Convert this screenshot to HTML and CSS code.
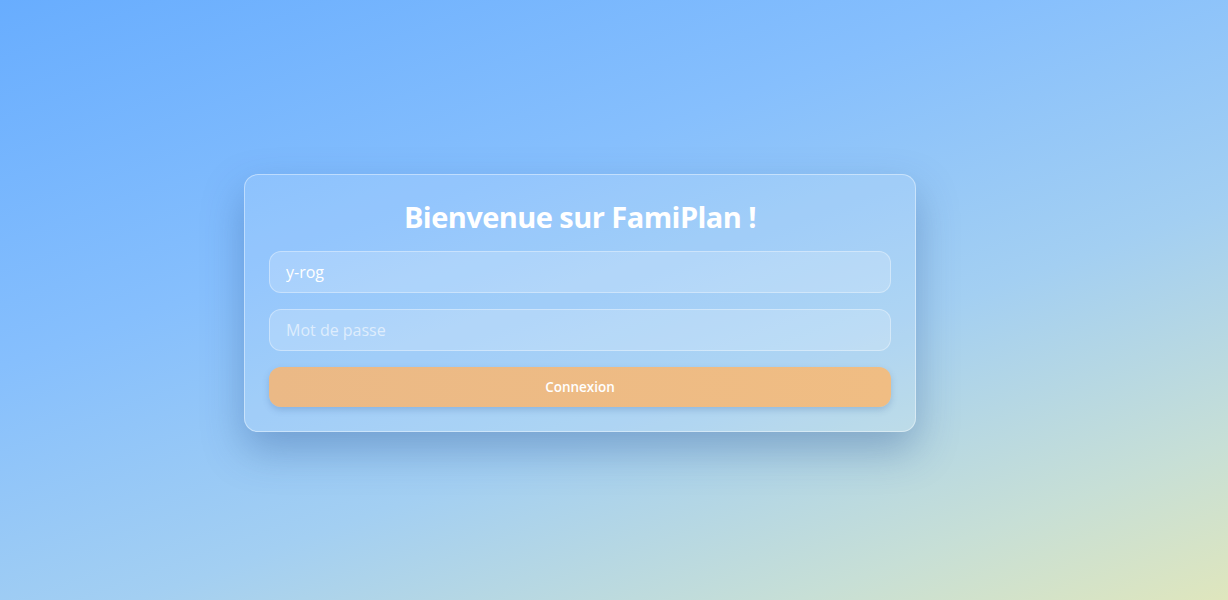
FILE: index.html
```html
<!DOCTYPE html>
<html lang="fr">
<head>
<meta charset="utf-8">
<title>FamiPlan</title>
<link rel="stylesheet" href="styles.css">
</head>
<body>
<main class="page">
  <form class="card">
    <h1 class="title">Bienvenue sur FamiPlan !</h1>
    <input class="field" type="text" value="y-rog">
    <input class="field" type="password" placeholder="Mot de passe">
    <button class="btn" type="button">Connexion</button>
  </form>
</main>
</body>
</html>
```
FILE: styles.css
```css
* { box-sizing: border-box; }
html, body { margin: 0; height: 100%; }
body {
  font-family: "Open Sans", "Noto Sans", sans-serif;
  background: linear-gradient(160deg, #68adfe 0%, #86bffd 35%, #a3cff2 62%, #c7dfd6 85%, #dfe6bd 100%);
  background-attachment: fixed;
  color: #fff;
}
.page {
  height: 100%;
  display: flex;
  align-items: center;
  justify-content: center;
  padding-top: 6px;
  padding-right: 68px;
}
.card {
  width: 672px;
  padding: 24px;
  border: 1px solid rgba(255,255,255,0.42);
  border-radius: 14px;
  background: rgba(255,255,255,0.12);
  box-shadow: 0 18px 40px rgba(40,80,140,0.35);
  display: flex;
  flex-direction: column;
  gap: 16px;
}
.title {
  margin: 0;
  font-size: 29px;
  font-weight: 700;
  text-align: center;
  line-height: 36px;
  letter-spacing: -0.55px;
}
.field {
  height: 42px;
  width: 100%;
  padding: 0 16px;
  border: 1px solid rgba(255,255,255,0.35);
  border-radius: 12px;
  background: rgba(255,255,255,0.19);
  color: #fff;
  font-family: inherit;
  font-size: 16px;
  outline: none;
}
.field::placeholder { color: rgba(255,255,255,0.6); }
.btn {
  height: 40px;
  width: 100%;
  border: none;
  border-radius: 12px;
  background: linear-gradient(90deg, #ebb986, #f0bd83);
  color: #fff;
  font-family: inherit;
  font-size: 13.5px;
  font-weight: 600;
  box-shadow: 0 3px 6px rgba(60,100,160,0.25);
  cursor: pointer;
}
```
